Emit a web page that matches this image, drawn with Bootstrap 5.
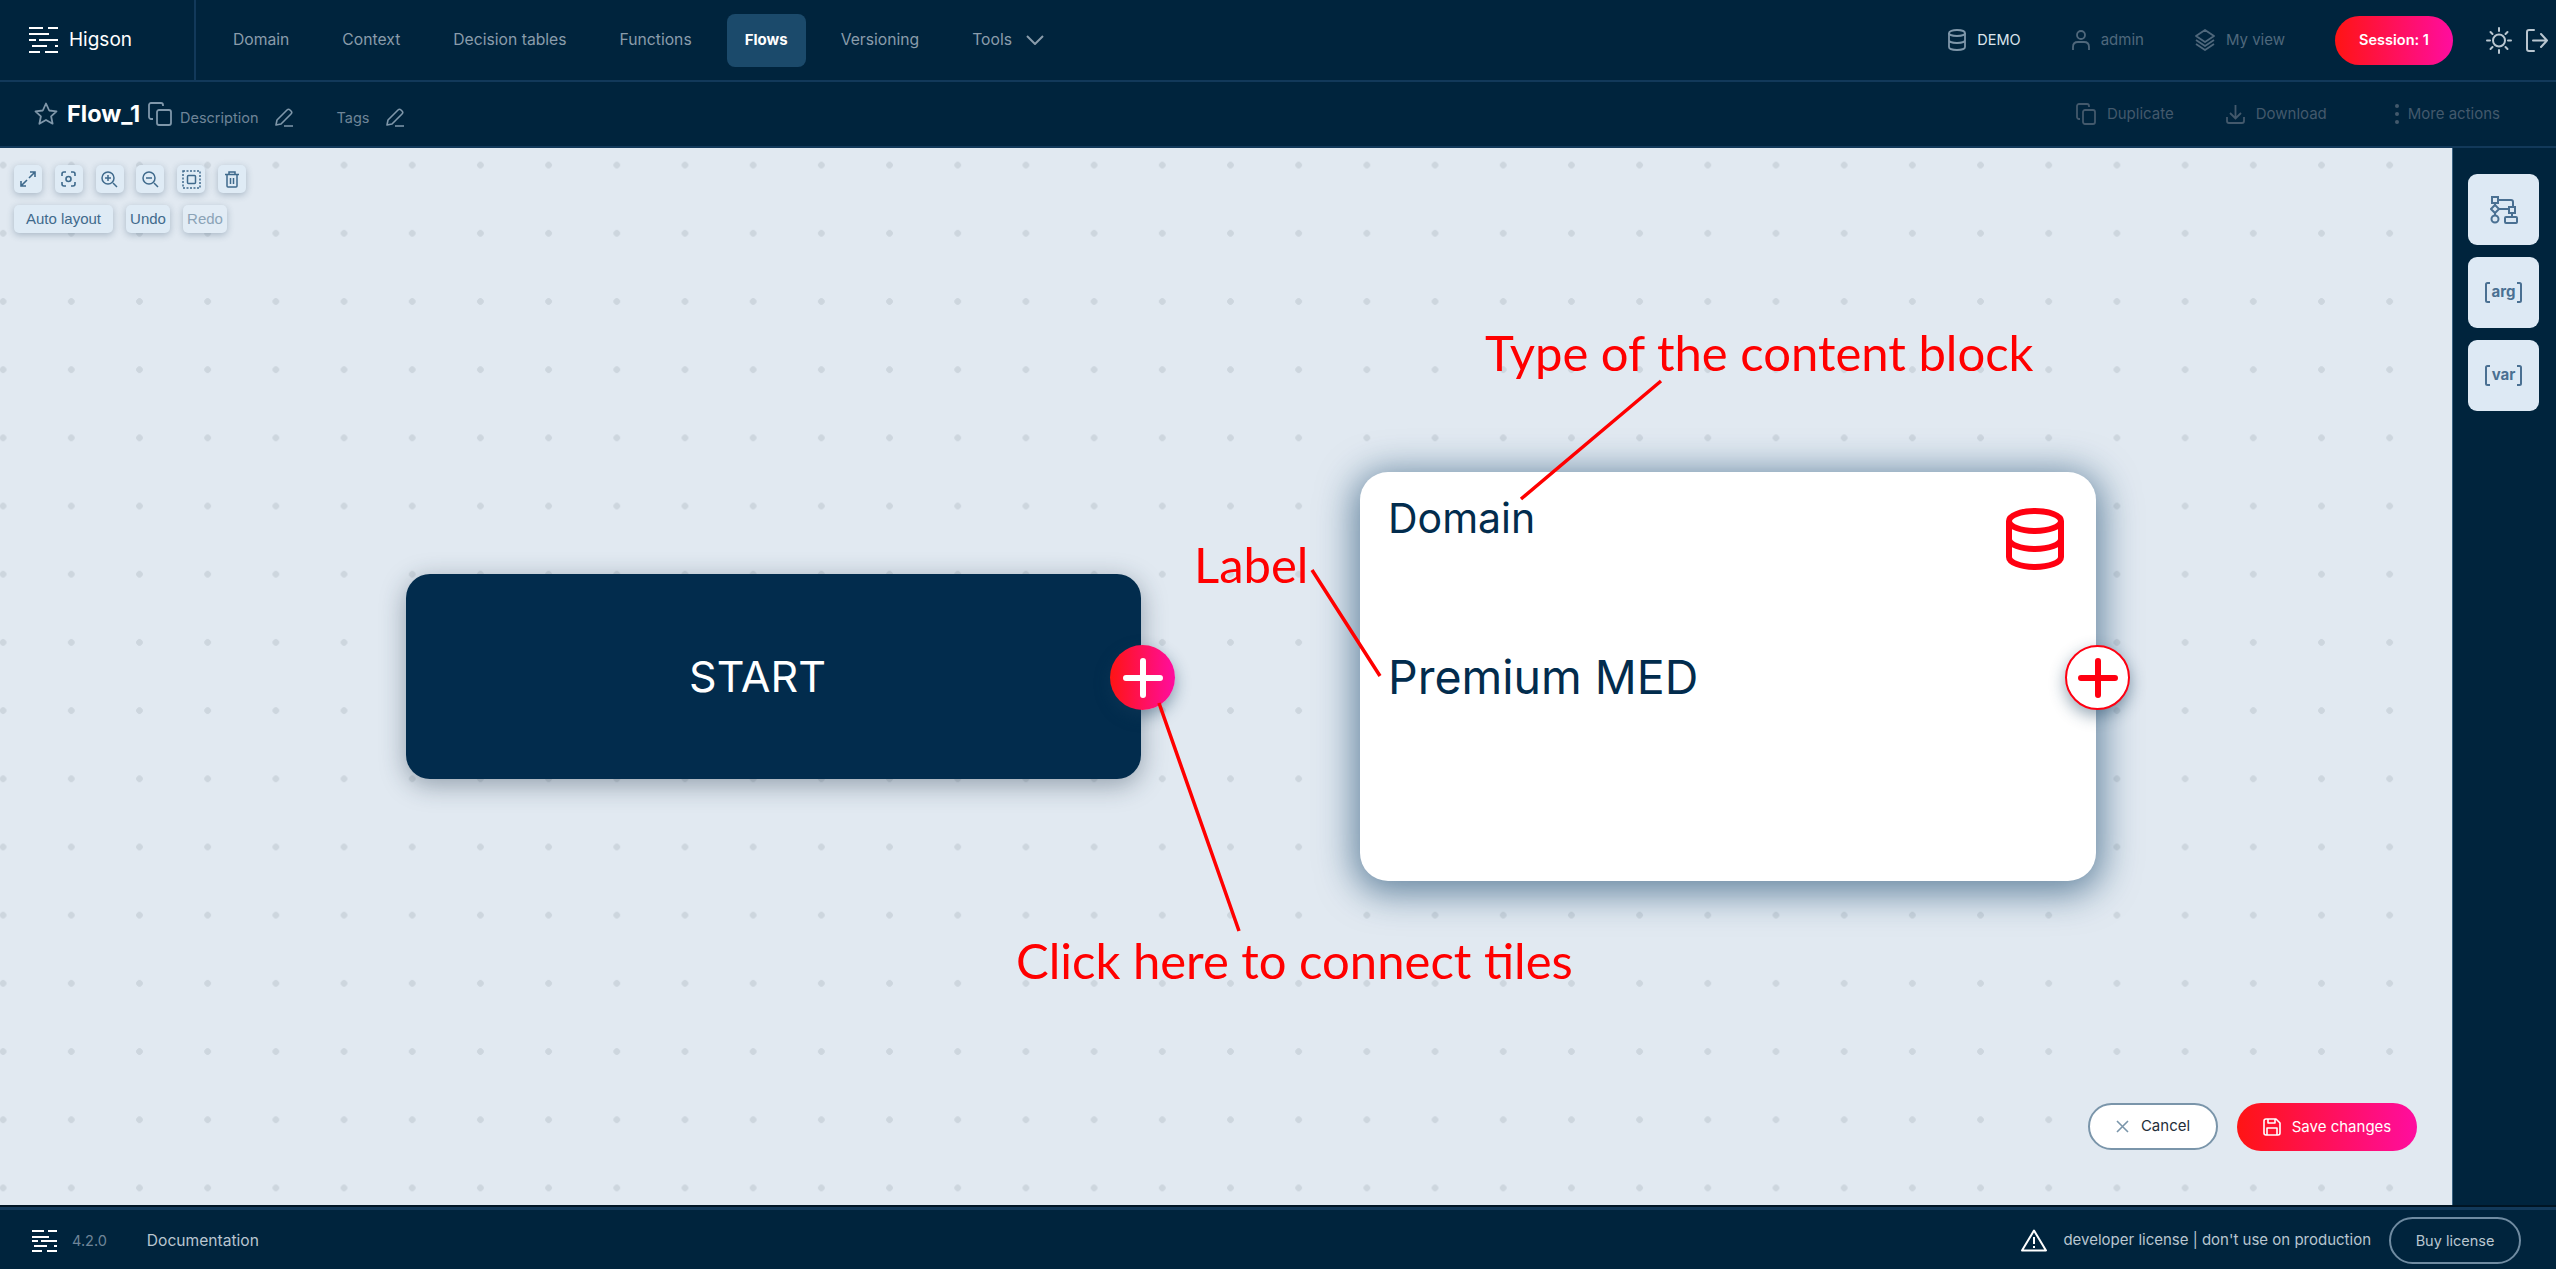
<!DOCTYPE html>
<html lang="en">

<head>
    <meta charset="UTF-8">
    <meta name="viewport" content="width=device-width, initial-scale=1.0">
    <title>Higson - Flow_1</title>
    <link href="https://cdn.jsdelivr.net/npm/bootstrap@5.3.0/dist/css/bootstrap.min.css" rel="stylesheet">
    <style>
        html, body { height: 100%; }
        body { font-family: "Inter", "Liberation Sans", sans-serif; background: #00243d; overflow: hidden; font-size: 15px; }
        svg { display: block; flex: none; }

        .hs-page { height: 1269px; }
        .hs-top { height: 82px; background: #00243d; border-bottom: 2px solid #12395a; }
        .hs-brand { width: 196px; height: 80px; padding-left: 29px; gap: 10px; border-right: 2px solid #12395a; color: #fff; font-size: 19px; }
        .hs-menu { margin-left: 19px; gap: 17px; }
        .hs-menu .nav-link { height: 53px; padding: 0 18px; display: flex; align-items: center; gap: 14px; color: #8a9cab; font-size: 15.7px; border-radius: 8px; }
        .hs-menu .nav-link.active { background: #1b4a6b; color: #fff; font-weight: 700; font-size: 15px; }
        .hs-topitem { color: #4f687c; font-size: 15px; gap: 11px; }
        .hs-topitem.on { color: #dbe5ec; font-size: 14.5px; }
        .hs-item-user { margin-left: 51px; }
        .hs-item-view { margin-left: 51px; }
        .hs-grad { background: linear-gradient(90deg, #ff1414, #ff0d9f); color: #fff; border: 0; }
        .hs-session { width: 118px; height: 49px; border-radius: 25px; font-size: 14.5px; font-weight: 600; margin-left: 50px; margin-right: 33px; padding: 0; }
        .hs-sun { margin-right: 14px; }
        .hs-exit { margin-right: 8px; }

        .hs-sub { height: 66px; background: #00243d; border-bottom: 2px solid #12395a; padding: 0 56px 0 34px; }
        .hs-title { color: #fff; font-size: 23.5px; font-weight: 700; margin: 0 8px 0 9px; }
        .hs-muted { color: #6f8598; font-size: 14.5px; margin-top: 7px; }
        .hs-pencil { margin-top: 6px; margin-left: 17px; }
        .hs-tags { margin-left: 42px; }
        .hs-dim { color: #43596c; font-size: 15px; gap: 11px; }
        .hs-download { margin-left: 52px; }
        .hs-more { gap: 8px; margin-left: 67px; }

        .hs-main { flex: 1 1 auto; min-height: 0; }
        .hs-canvas { flex: 1 1 auto; position: relative; overflow: hidden; background-color: #e1e9f1;
            background-image: radial-gradient(circle, #cdd6de 3px, transparent 3.6px);
            background-size: 68.2px 68.2px; background-position: -31px -17px; }
        .hs-side { width: 104px; background: #00243d; border-left: 1px solid #3b6280; padding: 26px 0 0 15px; gap: 12px; }
        .hs-sidebtn { width: 71px; height: 71px; border-radius: 9px; background: #dde9f4; color: #4a7092; font-weight: 700; font-size: 15px; gap: 2px; }

        .hs-tools { padding: 17px 0 0 14px; gap: 12px; position: absolute; left: 0; top: 0; }
        .hs-tool { height: 28px; padding: 1px 0 0; background: #dfebf5; border: 0; border-radius: 5px; box-shadow: 0 2px 7px rgba(40, 70, 100, .3); color: #3f6a8c; font-family: "Liberation Sans", sans-serif; font-size: 15px; }
        .hs-tool.square { width: 28px; padding: 0; }
        .hs-iconrow { gap: 12.8px; }
        .hs-textrow { gap: 13px; }
        .hs-tool.faded { color: #8ba3b7; background: #e2ecf5; }
        .hs-tool-auto { width: 99px; }
        .hs-tool-step { width: 44px; }

        .hs-node { position: absolute; }
        .hs-start { left: 406px; top: 426px; width: 735px; height: 205px; border-radius: 24px; background: #022c4d; color: #fff; font-size: 43px; padding-right: 32px; box-shadow: 0 6px 26px rgba(30, 50, 70, .4); }
        .hs-tile { left: 1360px; top: 324px; width: 736px; height: 409px; border-radius: 28px; background: #fff; color: #022c4d; box-shadow: 0 6px 36px 6px rgba(10, 60, 100, .58); padding: 22px 28px; }
        .hs-tile-type { font-size: 41px; line-height: 48px; }
        .hs-tile-label { font-size: 46.500px; line-height: 48px; margin-top: 111px; }
        .hs-dbicon { position: absolute; left: 646px; top: 36px; }
        .hs-plus { position: absolute; width: 65px; height: 65px; border-radius: 50%; box-shadow: 0 6px 16px rgba(20, 60, 90, .45); }
        .hs-plus-start { left: 1110px; top: 497px; }
        .hs-plus-tile { left: 2065px; top: 497px; background: #fff; border: 2px solid #f01; }

        .hs-note { position: absolute; color: #f00; font-family: "Lato", "Liberation Sans", sans-serif; font-size: 49px; line-height: 1; white-space: nowrap; }
        .hs-note-type { left: 1485px; top: 180px; }
        .hs-note-label { left: 1194px; top: 392px; }
        .hs-note-click { left: 1016px; top: 788px; }
        .hs-lines { position: absolute; left: 0; top: -148px; width: 2452px; height: 1269px; pointer-events: none; }

        .hs-actions { position: absolute; right: 35px; bottom: 54px; gap: 19px; }
        .hs-cancel { width: 130px; height: 47px; border-radius: 24px; background: #fff; border: 2px solid #7a95aa; color: #1f2e3a; font-size: 15px; gap: 12px; padding: 0; }
        .hs-save { width: 180px; height: 48px; border-radius: 24px; font-size: 15px; gap: 11px; padding: 0; }

        .hs-foot { height: 64px; background: #00243d; border-top: 2px solid #001524; box-shadow: inset 0 3px 0 #12395a; padding: 5px 35px 0 32px; color: #b9c6d0; font-size: 15px; }
        .hs-version { color: #6f8598; margin-left: 15px; font-size: 14.5px; }
        .hs-doc { margin-left: 40px; font-size: 15.6px; }
        .hs-buy { width: 132px; height: 47px; border-radius: 24px; border: 2px solid #6f8ba1; background: transparent; color: #b9c6d0; font-size: 14.5px; padding: 0; margin-left: 18px; }
    </style>
</head>

<body>
    <div class="hs-page d-flex flex-column">
        <!-- Top bar -->
        <header class="hs-top d-flex align-items-center">
            <div class="hs-brand d-flex align-items-center">
                <svg width="30" height="28" viewBox="0 0 30 28" stroke="#fff" stroke-width="2"><path d="M0 2h14M19 2h10M0 8h20M0 14h7M10 14h19M3 20h15M26 20h3M0 26h11M16 26h13"/></svg>
                <span>Higson</span>
            </div>
            <ul class="nav hs-menu">
                <li class="nav-item"><a class="nav-link" href="#">Domain</a></li>
                <li class="nav-item"><a class="nav-link" href="#">Context</a></li>
                <li class="nav-item"><a class="nav-link" href="#">Decision tables</a></li>
                <li class="nav-item"><a class="nav-link" href="#">Functions</a></li>
                <li class="nav-item"><a class="nav-link active" href="#">Flows</a></li>
                <li class="nav-item"><a class="nav-link" href="#">Versioning</a></li>
                <li class="nav-item"><a class="nav-link" href="#">Tools
                    <svg width="18" height="10" viewBox="0 0 18 10" fill="none" stroke="#8a9cab" stroke-width="2"><path d="M1 1l8 8 8-8"/></svg></a></li>
            </ul>
            <div class="d-flex align-items-center ms-auto">
                <div class="hs-topitem on d-flex align-items-center">
                    <svg width="18" height="22" viewBox="0 0 18 22" fill="none" stroke="#7f97aa" stroke-width="1.8"><ellipse cx="9" cy="4" rx="8" ry="3"/><path d="M1 4v14c0 1.700 3.600 3 8 3s8-1.300 8-3V4M1 11c0 1.700 3.600 3 8 3s8-1.300 8-3"/></svg>
                    <span>DEMO</span>
                </div>
                <div class="hs-topitem hs-item-user d-flex align-items-center">
                    <svg width="18" height="22" viewBox="0 0 18 22" fill="none" stroke="#4f687c" stroke-width="1.8"><circle cx="9" cy="6" r="4"/><path d="M1 21v-3c0-3 2-5 5-5h6c3 0 5 2 5 5v3"/></svg>
                    <span>admin</span>
                </div>
                <div class="hs-topitem hs-item-view d-flex align-items-center">
                    <svg width="20" height="24" viewBox="0 0 20 24" fill="none" stroke="#4f687c" stroke-width="1.8" stroke-linejoin="round"><path d="M10 2l9 6-9 6-9-6zM1 12l9 6 9-6M1 16l9 6 9-6"/></svg>
                    <span>My view</span>
                </div>
                <button class="btn hs-session hs-grad" type="button">Session: 1</button>
                <svg class="hs-sun" width="26" height="27" viewBox="0 0 26 27" fill="none" stroke="#b9c6d0" stroke-width="2" stroke-linecap="round"><circle cx="13" cy="13.500" r="6"/><path d="M13 1v3M13 23v3M1 13.500h3M22 13.500h3M4.500 5l2 2M19.500 20l2 2M21.500 5l-2 2M6.500 20l-2 2"/></svg>
                <svg class="hs-exit" width="22" height="23" viewBox="0 0 22 23" fill="none" stroke="#b9c6d0" stroke-width="2" stroke-linecap="round" stroke-linejoin="round"><path d="M8 1H3C2 1 1 2 1 3v17c0 1 1 2 2 2h5M7 11.500h14M15 5l6 6.500-6 6.500"/></svg>
            </div>
        </header>

        <!-- Flow title bar -->
        <div class="hs-sub d-flex align-items-center">
            <svg width="24" height="24" viewBox="0 0 24 24" fill="none" stroke="#7f97aa" stroke-width="1.8" stroke-linejoin="round"><path d="M12 1.500l3.200 7 7.300.8-5.400 5 1.500 7.400L12 18l-6.600 3.700 1.500-7.400-5.400-5 7.300-.8z"/></svg>
            <span class="hs-title">Flow_1</span>
            <svg width="24" height="24" viewBox="0 0 24 24" fill="none" stroke="#7f97aa" stroke-width="1.8"><rect x="9" y="8" width="14" height="15" rx="2"/><path d="M5 17H3c-1 0-2-1-2-2V3c0-1 1-2 2-2h10c1 0 2 1 2 2v1"/></svg>
            <span class="hs-muted ms-2">Description</span>
            <svg class="hs-pencil" width="19" height="19" viewBox="0 0 19 19" fill="none" stroke="#7f97aa" stroke-width="1.6" stroke-linejoin="round"><path d="M1 17l1-5L12 2c1-1 2-1 3 0l1 1c1 1 1 2 0 3L6 16zM9 18h9"/></svg>
            <span class="hs-muted hs-tags">Tags</span>
            <svg class="hs-pencil" width="19" height="19" viewBox="0 0 19 19" fill="none" stroke="#7f97aa" stroke-width="1.6" stroke-linejoin="round"><path d="M1 17l1-5L12 2c1-1 2-1 3 0l1 1c1 1 1 2 0 3L6 16zM9 18h9"/></svg>
            <div class="d-flex align-items-center ms-auto">
                <div class="hs-dim d-flex align-items-center">
                    <svg width="20" height="22" viewBox="0 0 20 22" fill="none" stroke="#43596c" stroke-width="1.8"><rect x="7" y="7" width="12" height="14" rx="2"/><path d="M4 16H3c-1 0-2-1-2-2V3c0-1 1-2 2-2h8c1 0 2 1 2 2v1"/></svg>
                    <span>Duplicate</span>
                </div>
                <div class="hs-dim hs-download d-flex align-items-center">
                    <svg width="19" height="20" viewBox="0 0 19 20" fill="none" stroke="#43596c" stroke-width="1.8"><path d="M9.500 1v13M4 9l5.500 5.500L15 9M1 13v4c0 1 1 2 2 2h13c1 0 2-1 2-2v-4"/></svg>
                    <span>Download</span>
                </div>
                <div class="hs-dim hs-more d-flex align-items-center">
                    <svg width="6" height="24" viewBox="0 0 6 24" fill="#43596c"><circle cx="3" cy="4" r="2"/><circle cx="3" cy="12" r="2"/><circle cx="3" cy="20" r="2"/></svg>
                    <span>More actions</span>
                </div>
            </div>
        </div>

        <!-- Canvas + right rail -->
        <div class="hs-main d-flex">
            <div class="hs-canvas">
                <div class="hs-tools d-flex flex-column">
                    <div class="hs-iconrow d-flex">
                        <button class="hs-tool square d-flex align-items-center justify-content-center" type="button"><svg width="16" height="16" viewBox="0 0 16 16" fill="none" stroke="#3f6a8c" stroke-width="1.600"><path d="M9 7l6-6M10 1h5v5M7 9l-6 6M1 10v5h5"/></svg></button>
                        <button class="hs-tool square d-flex align-items-center justify-content-center" type="button"><svg width="15" height="16" viewBox="0 0 15 16" fill="none" stroke="#3f6a8c" stroke-width="1.600"><circle cx="7.500" cy="8" r="2.500"/><path d="M1 5V3c0-1 1-2 2-2h2M10 1h2c1 0 2 1 2 2v2M14 11v2c0 1-1 2-2 2h-2M5 15H3c-1 0-2-1-2-2v-2"/></svg></button>
                        <button class="hs-tool square d-flex align-items-center justify-content-center" type="button"><svg width="17" height="17" viewBox="0 0 17 17" fill="none" stroke="#3f6a8c" stroke-width="1.500"><circle cx="7" cy="7" r="6"/><path d="M7 4v6M4 7h6M12 12l4 4"/></svg></button>
                        <button class="hs-tool square d-flex align-items-center justify-content-center" type="button"><svg width="17" height="17" viewBox="0 0 17 17" fill="none" stroke="#3f6a8c" stroke-width="1.500"><circle cx="7" cy="7" r="6"/><path d="M4 7h6M12 12l4 4"/></svg></button>
                        <button class="hs-tool square d-flex align-items-center justify-content-center" type="button"><svg width="19" height="19" viewBox="0 0 19 19" fill="none" stroke="#3f6a8c"><rect x="1" y="1" width="17" height="17" stroke-width="1.500" stroke-dasharray="2 1.500"/><rect x="5.500" y="5.500" width="8" height="8" rx="1" stroke-width="1.500"/></svg></button>
                        <button class="hs-tool square d-flex align-items-center justify-content-center" type="button"><svg width="14" height="17" viewBox="0 0 14 17" fill="none" stroke="#3f6a8c" stroke-width="1.500"><path d="M0 3.500h14M4 3V1h6v2M2 4v11c0 .600.500 1 1 1h8c.500 0 1-.400 1-1V4M5.500 7v6M8.500 7v6"/></svg></button>
                    </div>
                    <div class="hs-textrow d-flex">
                        <button class="hs-tool hs-tool-auto" type="button">Auto layout</button>
                        <button class="hs-tool hs-tool-step" type="button">Undo</button>
                        <button class="hs-tool hs-tool-step faded" type="button">Redo</button>
                    </div>
                </div>

                <div class="hs-node hs-start d-flex align-items-center justify-content-center">START</div>
                <div class="hs-plus hs-plus-start hs-grad d-flex align-items-center justify-content-center">
                    <svg width="40" height="40" viewBox="0 0 40 40" stroke="#fff" stroke-width="6" stroke-linecap="round"><path d="M20 3v34M3 20h34"/></svg>
                </div>

                <div class="hs-node hs-tile">
                    <div class="hs-tile-type">Domain</div>
                    <div class="hs-tile-label">Premium MED</div>
                    <svg class="hs-dbicon" width="58" height="62" viewBox="0 0 58 62" fill="none" stroke="#f01" stroke-width="6"><ellipse cx="29" cy="13" rx="26" ry="10"/><path d="M3 13v36c0 5.500 11.600 10 26 10s26-4.500 26-10V13M3 31c0 5.500 11.600 10 26 10s26-4.500 26-10"/></svg>
                </div>
                <div class="hs-plus hs-plus-tile d-flex align-items-center justify-content-center">
                    <svg width="40" height="40" viewBox="0 0 40 40" stroke="#f01" stroke-width="6" stroke-linecap="round"><path d="M20 3v34M3 20h34"/></svg>
                </div>

                <!-- Red annotations drawn over the screenshot -->
                <div class="hs-note hs-note-type">Type of the content block</div>
                <div class="hs-note hs-note-label">Label</div>
                <div class="hs-note hs-note-click">Click here to connect tiles</div>
                <svg class="hs-lines" viewBox="0 0 2452 1269" stroke="#f00" stroke-width="3.500" fill="none"><path d="M1661 381L1521 499M1312 570l68 106M1159 703l80 228"/></svg>

                <div class="hs-actions d-flex">
                    <button class="btn hs-cancel d-flex align-items-center justify-content-center" type="button">
                        <svg width="13" height="13" viewBox="0 0 13 13" stroke="#7a95aa" stroke-width="1.600"><path d="M1 1l11 11M12 1L1 12"/></svg>Cancel</button>
                    <button class="btn hs-save hs-grad d-flex align-items-center justify-content-center" type="button">
                        <svg width="18" height="18" viewBox="0 0 18 18" fill="none" stroke="#fff" stroke-width="1.600" stroke-linejoin="round"><path d="M1 3c0-1 1-2 2-2h10l4 4v10c0 1-1 2-2 2H3c-1 0-2-1-2-2zM4 17v-7h10v7M5 1v4h7V1"/></svg>Save changes</button>
                </div>
            </div>
            <aside class="hs-side d-flex flex-column">
                <div class="hs-sidebtn d-flex align-items-center justify-content-center">
                    <svg width="28" height="28" viewBox="0 0 28 28" fill="none" stroke="#4a7092" stroke-width="2"><rect x="2" y="1" width="6" height="6"/><path d="M8 4h13c1 0 2 1 2 2v5M5 7v3M5 16v3M9 13h10"/><path d="M5 9l4 4-4 4-4-4z"/><rect x="19" y="11" width="6" height="6"/><circle cx="5" cy="23" r="3.500"/><path d="M22 17v4"/><rect x="15" y="21" width="12" height="6" rx="1"/></svg>
                </div>
                <div class="hs-sidebtn d-flex align-items-center justify-content-center">
                    <svg width="5" height="21" viewBox="0 0 5 21" fill="none" stroke="#4a7092" stroke-width="2"><path d="M5 1H2.500C1.500 1 1 1.500 1 2.500v16c0 1 .5 1.500 1.500 1.500H5"/></svg>
                    <span>arg</span>
                    <svg width="5" height="21" viewBox="0 0 5 21" fill="none" stroke="#4a7092" stroke-width="2"><path d="M0 1h2.500C3.500 1 4 1.500 4 2.500v16c0 1-.5 1.500-1.500 1.500H0"/></svg>
                </div>
                <div class="hs-sidebtn d-flex align-items-center justify-content-center">
                    <svg width="5" height="21" viewBox="0 0 5 21" fill="none" stroke="#4a7092" stroke-width="2"><path d="M5 1H2.500C1.500 1 1 1.500 1 2.500v16c0 1 .5 1.500 1.500 1.500H5"/></svg>
                    <span>var</span>
                    <svg width="5" height="21" viewBox="0 0 5 21" fill="none" stroke="#4a7092" stroke-width="2"><path d="M0 1h2.500C3.500 1 4 1.500 4 2.500v16c0 1-.5 1.500-1.500 1.500H0"/></svg>
                </div>
            </aside>
        </div>

        <!-- Footer -->
        <footer class="hs-foot d-flex align-items-center">
            <svg width="25" height="23" viewBox="0 0 25 23" stroke="#fff" stroke-width="2"><path d="M0 2h12M16 2h9M0 8h17M0 12h6M9 12h16M2 17h13M22 17h3M0 22h10M15 22h10"/></svg>
            <span class="hs-version">4.2.0</span>
            <span class="hs-doc">Documentation</span>
            <svg class="ms-auto" width="26" height="23" viewBox="0 0 26 23" fill="none" stroke="#fff" stroke-width="2" stroke-linejoin="round"><path d="M13 1.500L25 21.500H1zM13 8v7M13 17v2"/></svg>
            <span class="ms-3">developer license | don't use on production</span>
            <button class="btn hs-buy" type="button">Buy license</button>
        </footer>
    </div>

    <script src="https://cdn.jsdelivr.net/npm/bootstrap@5.3.0/dist/js/bootstrap.bundle.min.js"></script>
</body>

</html>
